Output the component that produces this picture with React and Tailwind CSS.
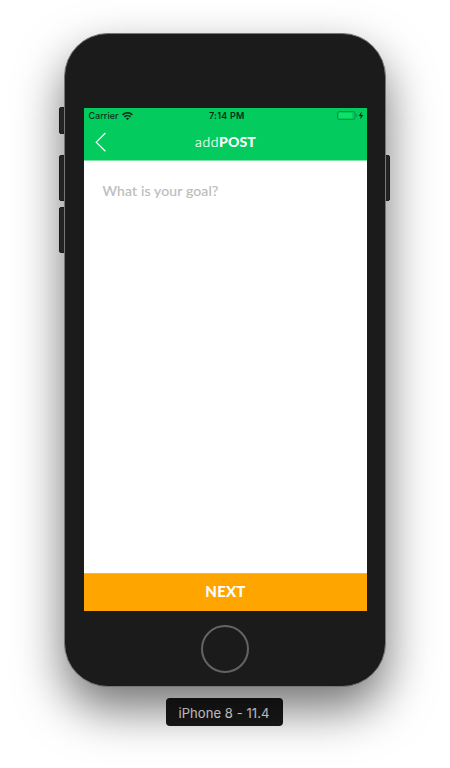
function StatusBar() {
  return (
    <div className="relative flex h-[15px] items-center justify-between pl-[5px] pr-[3px] font-['Inter',sans-serif] text-[9px] leading-[15px] text-[#06351b]">
      <div className="flex items-center gap-[4px]">
        <span className="font-medium">Carrier</span>
        <svg width="11" height="8" viewBox="0 0 11 8" fill="none" stroke="#052d17" strokeWidth="1.6">
          <path d="M0.6 2.9C3.4 0.1 7.6 0.1 10.4 2.9" />
          <path d="M2.4 4.9C4.2 3.1 6.8 3.1 8.6 4.9" />
          <path d="M5.5 7.9L3.9 6.3C4.8 5.4 6.2 5.4 7.1 6.3Z" fill="#052d17" stroke="none" />
        </svg>
      </div>
      <span className="absolute left-[125.5px] whitespace-nowrap font-semibold tracking-[0.22px] text-[#052d17]">7:14 PM</span>
      <svg width="28" height="9" viewBox="0 0 28 9" fill="none">
        <rect x="1.5" y="0.6" width="17.5" height="7.8" rx="1.6" stroke="#05943f" />
        <rect x="2.8" y="1.8" width="13.2" height="5.4" rx="0.5" fill="#0be366" />
        <path d="M20.3 3v3c1.2-.6 1.2-2.4 0-3Z" fill="#05943f" />
        <path d="M25.6 0.8L22.7 5H24.7L24.2 8.2L27.3 3.9H25.2Z" fill="#052d17" />
      </svg>
    </div>
  );
}

function Header() {
  return (
    <header className="h-[53px] shrink-0 border-b border-[#80e4a8] bg-[#03cb5d]">
      <StatusBar />
      <div className="grid h-[37px] grid-cols-[40px_1fr_40px] items-center font-['Lato',sans-serif] text-white">
        <svg className="ml-[11px] mt-[1px]" width="12" height="20" viewBox="0 0 12 20" fill="none" stroke="white" strokeWidth="1.2">
          <path d="M10.4 1L1.2 10.2L10.4 19.2" />
        </svg>
        <h1 className="whitespace-nowrap pl-[1px] text-center text-[14px] leading-[20px]">
          <span className="font-light tracking-[0.6px] [-webkit-text-stroke:0.2px_white]">add</span>
          <span className="font-black tracking-[0.15px]">POST</span>
        </h1>
      </div>
    </header>
  );
}

export default function App() {
  return (
    <main className="flex h-[768px] w-[450px] flex-col items-center overflow-hidden bg-white pt-[33px]">
      <div className="relative h-[654px] w-[322px] shrink-0">
        <div className="absolute -left-[5px] top-[74px] h-[27px] w-[8px] rounded-l-[2px] border border-[#222222] bg-[#303030]" />
        <div className="absolute -left-[5px] top-[122px] h-[46px] w-[8px] rounded-l-[2px] border border-[#222222] bg-[#303030]" />
        <div className="absolute -left-[5px] top-[174px] h-[46px] w-[8px] rounded-l-[2px] border border-[#222222] bg-[#303030]" />
        <div className="absolute -right-[4px] top-[122px] h-[46px] w-[8px] rounded-r-[2px] border border-[#222222] bg-[#303030]" />
        <div className="relative flex h-full flex-col items-center rounded-[44px] border border-[#777777] bg-[#1b1b1b] pt-[74px] shadow-[0_22px_48px_rgba(0,0,0,0.55)]">
          <section className="flex h-[503px] w-[283px] shrink-0 flex-col bg-white">
            <Header />
            <div className="flex-1 px-[19px] pt-[20px] font-['Lato',sans-serif] text-[14px] leading-[20px] tracking-[0.15px] text-[#bcbcbc] [-webkit-text-stroke:0.2px_#bcbcbc]">
              What is your goal?
            </div>
            <button className="h-[38px] shrink-0 border-t border-[#ffb52d] bg-[#ffa500] pb-[3px] pl-[1px] font-['Lato',sans-serif] text-[15px] font-black leading-[34px] tracking-[0.2px] text-white">
              NEXT
            </button>
          </section>
          <div className="mt-[14px] size-[48px] shrink-0 rounded-full border-2 border-[#646464]" />
        </div>
      </div>
      <div className="mr-[2px] mt-[11px] flex h-[28px] w-[117px] shrink-0 items-center justify-center rounded-[4px] bg-[#191919] pt-[2px] font-['Inter',sans-serif] text-[13px] leading-[20px] tracking-[0.07px] text-[#f2f2f2]">
        iPhone 8 - 11.4
      </div>
    </main>
  );
}
